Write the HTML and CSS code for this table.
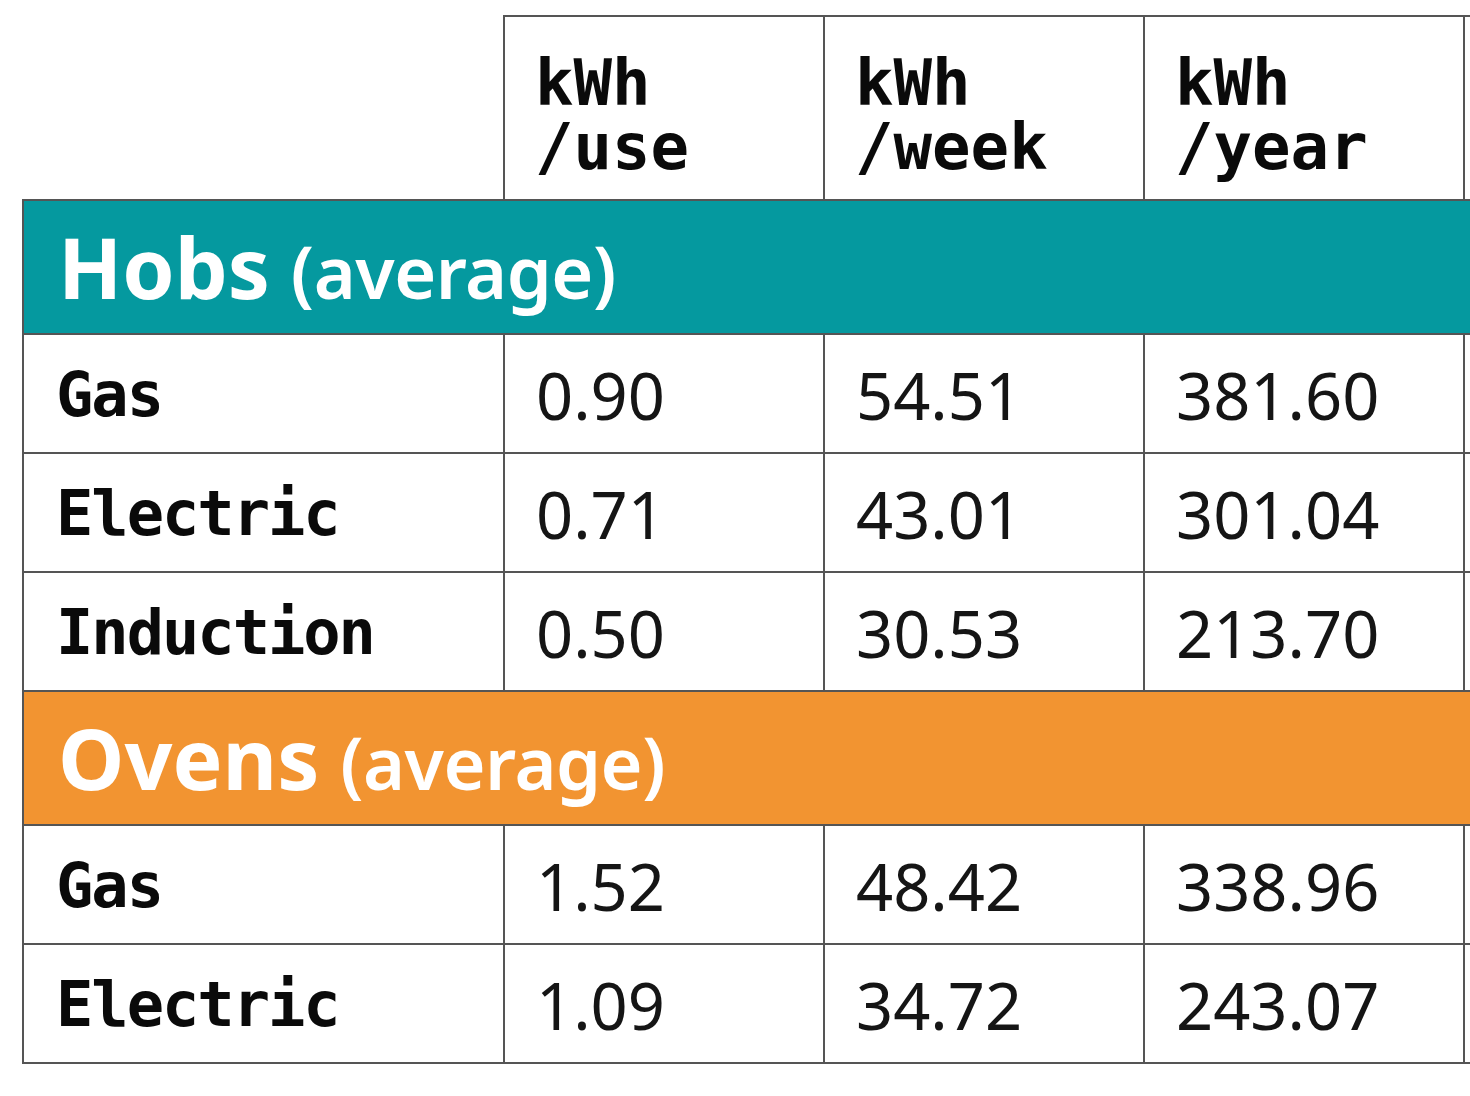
FILE: index.html
```html
<!DOCTYPE html>
<html lang="en">
<head>
<meta charset="utf-8">
<title>Cooking energy use</title>
<link rel="stylesheet" href="styles.css">
</head>
<body>
<table class="energy">
  <colgroup>
    <col class="c-label">
    <col class="c-num">
    <col class="c-num">
    <col class="c-num">
    <col class="c-extra">
  </colgroup>
  <thead>
    <tr class="head">
      <th class="blank"></th>
      <th><span class="ln">kWh</span><span class="ln">/use</span></th>
      <th><span class="ln">kWh</span><span class="ln">/week</span></th>
      <th><span class="ln">kWh</span><span class="ln">/year</span></th>
      <th class="extra"></th>
    </tr>
  </thead>
  <tbody>
    <tr class="band hobs">
      <td colspan="5"><span class="main">Hobs</span> <span class="sub">(average)</span></td>
    </tr>
    <tr class="row">
      <th>Gas</th><td>0.90</td><td>54.51</td><td>381.60</td><td class="extra"></td>
    </tr>
    <tr class="row">
      <th>Electric</th><td>0.71</td><td>43.01</td><td>301.04</td><td class="extra"></td>
    </tr>
    <tr class="row">
      <th>Induction</th><td>0.50</td><td>30.53</td><td>213.70</td><td class="extra"></td>
    </tr>
    <tr class="band ovens">
      <td colspan="5"><span class="main">Ovens</span> <span class="sub">(average)</span></td>
    </tr>
    <tr class="row">
      <th>Gas</th><td>1.52</td><td>48.42</td><td>338.96</td><td class="extra"></td>
    </tr>
    <tr class="row">
      <th>Electric</th><td>1.09</td><td>34.72</td><td>243.07</td><td class="extra"></td>
    </tr>
  </tbody>
</table>
</body>
</html>
```

FILE: styles.css
```css
html, body {
  margin: 0;
  padding: 0;
  background: #ffffff;
  overflow: hidden;
}

body {
  width: 1470px;
  height: 1096px;
}

.energy {
  border-collapse: collapse;
  table-layout: fixed;
  width: 1581px;
  margin: 15px 0 0 22px;
  color: #111111;
}

.c-label { width: 481px; }
.c-num { width: 320px; }
.c-extra { width: 140px; }

.energy th,
.energy td {
  border: 2px solid #555555;
  padding: 0;
  text-align: left;
}

.head th {
  height: 168px;
  padding: 14px 0 0 30px;
  font-family: "DejaVu Sans Mono", monospace;
  font-weight: bold;
  font-size: 64px;
  vertical-align: middle;
  color: #0a0a0a;
}

.head .ln {
  display: block;
  line-height: 64px;
}

.head th.blank {
  border-top: none;
  border-left: none;
}

.band td {
  height: 128px;
  padding: 4px 0 0 34px;
  color: #ffffff;
  vertical-align: middle;
  white-space: nowrap;
  font-family: "Noto Sans", sans-serif;
  font-weight: bold;
  font-size: 80px;
  line-height: 100px;
}

.hobs td { background: #05999f; }
.ovens td { background: #f29431; }

.band .main {
  font-size: 84px;
}

.band .sub {
  font-size: 72px;
  letter-spacing: -0.5px;
  font-weight: 600;
}

.row th,
.row td {
  height: 115px;
  padding-top: 2px;
  vertical-align: middle;
}

.row th {
  padding-left: 32px;
  font-family: "DejaVu Sans Mono", monospace;
  font-weight: bold;
  font-size: 62px;
  letter-spacing: -2px;
  color: #0a0a0a;
}

.row td {
  padding-left: 31px;
  font-family: "Noto Sans", sans-serif;
  font-weight: normal;
  font-size: 65px;
  color: #151515;
}
```
